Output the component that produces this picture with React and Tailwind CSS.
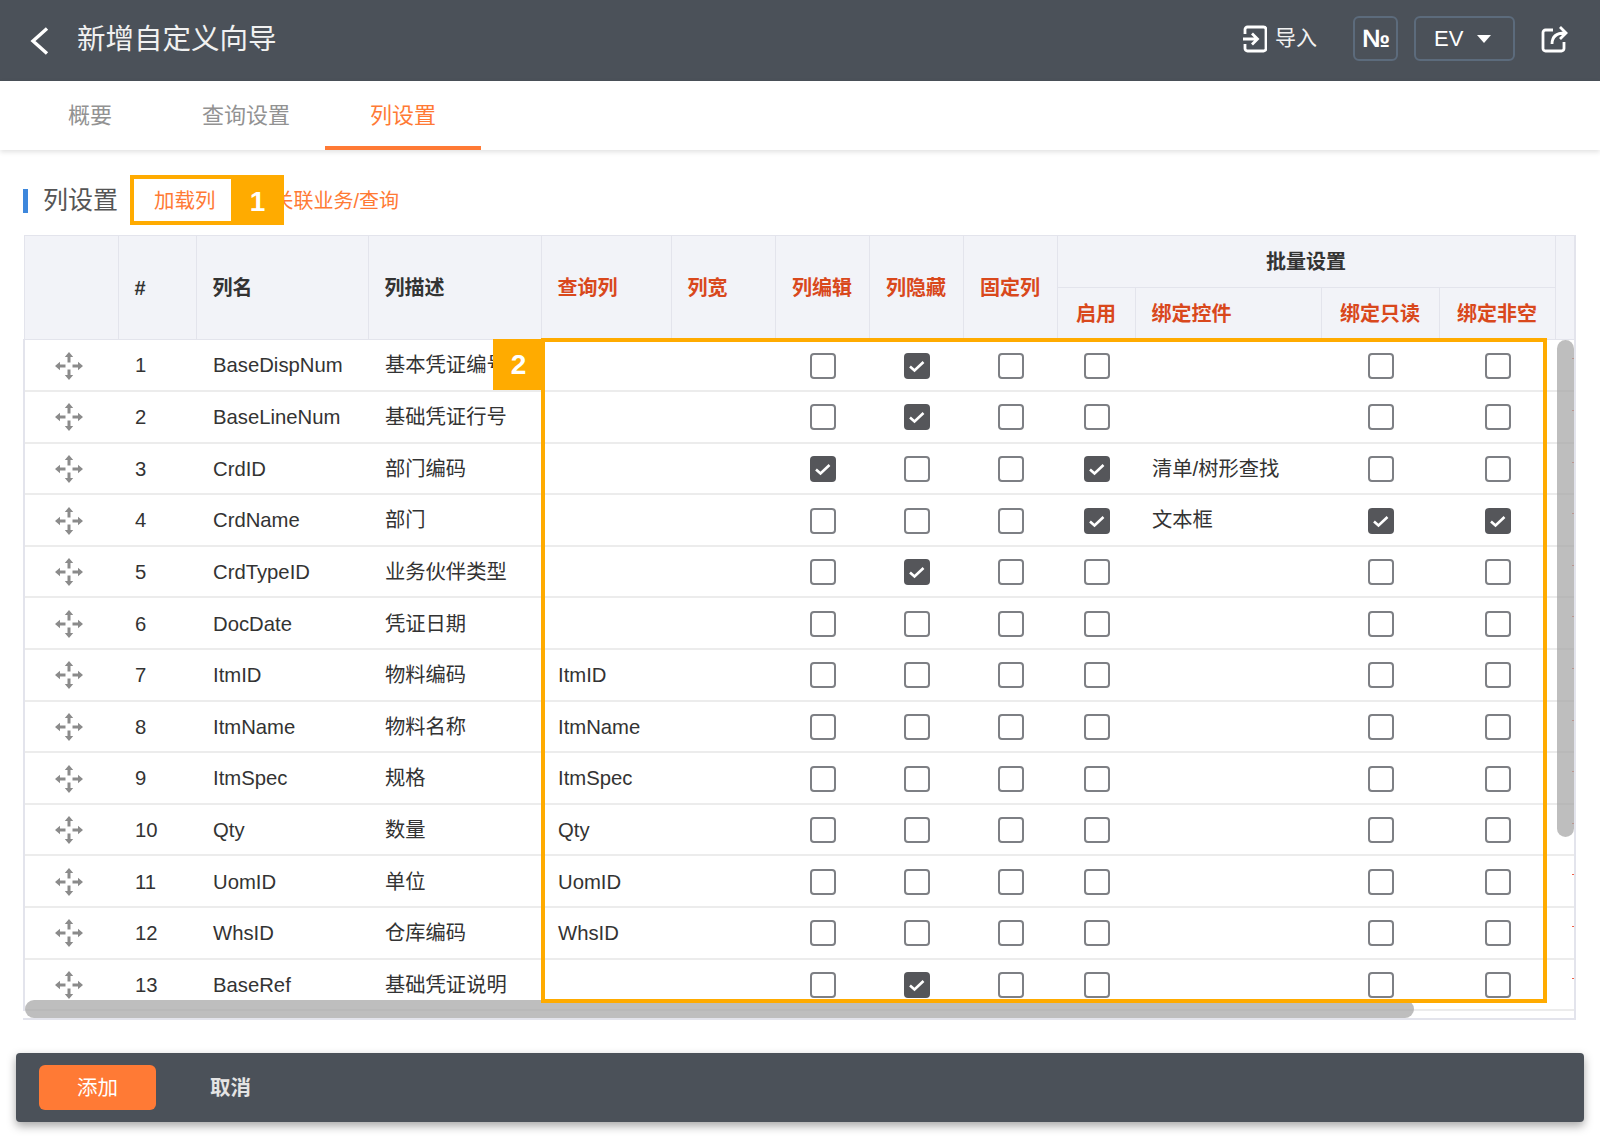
import React from 'react';

const rows = [
  { n: 1, name: 'BaseDispNum', desc: '基本凭证编号', query: '', checks: [0, 1, 0, 0, 0, 0] },
  { n: 2, name: 'BaseLineNum', desc: '基础凭证行号', query: '', checks: [0, 1, 0, 0, 0, 0] },
  { n: 3, name: 'CrdID', desc: '部门编码', query: '', checks: [1, 0, 0, 1, 0, 0], control: '清单/树形查找' },
  { n: 4, name: 'CrdName', desc: '部门', query: '', checks: [0, 0, 0, 1, 1, 1], control: '文本框' },
  { n: 5, name: 'CrdTypeID', desc: '业务伙伴类型', query: '', checks: [0, 1, 0, 0, 0, 0] },
  { n: 6, name: 'DocDate', desc: '凭证日期', query: '', checks: [0, 0, 0, 0, 0, 0] },
  { n: 7, name: 'ItmID', desc: '物料编码', query: 'ItmID', checks: [0, 0, 0, 0, 0, 0] },
  { n: 8, name: 'ItmName', desc: '物料名称', query: 'ItmName', checks: [0, 0, 0, 0, 0, 0] },
  { n: 9, name: 'ItmSpec', desc: '规格', query: 'ItmSpec', checks: [0, 0, 0, 0, 0, 0] },
  { n: 10, name: 'Qty', desc: '数量', query: 'Qty', checks: [0, 0, 0, 0, 0, 0] },
  { n: 11, name: 'UomID', desc: '单位', query: 'UomID', checks: [0, 0, 0, 0, 0, 0] },
  { n: 12, name: 'WhsID', desc: '仓库编码', query: 'WhsID', checks: [0, 0, 0, 0, 0, 0] },
  { n: 13, name: 'BaseRef', desc: '基础凭证说明', query: '', checks: [0, 1, 0, 0, 0, 0] },
];

const colWidths = [94, 78, 172, 173, 130, 104, 94, 94, 94, 78, 186, 118, 116, 20];

function Checkbox({ checked }) {
  if (checked) {
    return (
      <span className="mx-auto flex h-[26px] w-[26px] items-center justify-center rounded-[4px] bg-[#55565a]">
        <svg width="20" height="20" viewBox="0 0 20 20" fill="none">
          <path d="M3 10.500l4.500 4 9-8.500" stroke="#fff" strokeWidth="2.600" />
        </svg>
      </span>
    );
  }
  return <span className="mx-auto block h-[26px] w-[26px] rounded-[4px] border-2 border-[#7d7f84] bg-white" />;
}

function DragIcon() {
  return (
    <svg className="mx-auto" width="28" height="28" viewBox="0 0 28 28" fill="#8b8b8b">
      <path d="M14 0l4.200 5h-2.700v5.500h-3V5H9.800z" />
      <path d="M14 28l4.200-5h-2.700v-5.500h-3V23H9.800z" />
      <path d="M0 14l5-4.200v2.700h5.500v3H5v2.700z" />
      <path d="M28 14l-5-4.200v2.700h-5.500v3H23v2.700z" />
    </svg>
  );
}

export default function App() {
  const thBase = 'border border-[#e3e4ec] bg-[#f2f3f8] text-[20px] font-bold';
  const thDark = `${thBase} px-4 text-left text-[#333]`;
  const thRed = `${thBase} text-center text-[#d9481c]`;
  const tdText = 'pl-[17px] pr-4 text-left text-[20.300px] text-[#333] whitespace-nowrap overflow-hidden';

  return (
    <div className="relative h-[1138px] w-[1600px] overflow-hidden bg-white font-['Liberation_Sans','Noto_Sans_CJK_SC',sans-serif]">
      {/* Top bar */}
      <div className="flex h-[81px] items-center bg-[#4b5159] pl-[30px] pr-[32px] text-white">
        <svg width="19" height="28" viewBox="0 0 19 28" fill="none">
          <path d="M17 1.500L3 14l14 12.500" stroke="#fff" strokeWidth="3.400" />
        </svg>
        <span className="ml-[28px] pb-[2px] text-[28.500px] text-[#f1f1f1]">新增自定义向导</span>
        <div className="ml-auto flex items-center pb-[4px]">
          <svg width="25" height="28" viewBox="0 0 25 28" fill="none" stroke="#fff" strokeWidth="2.800">
            <path d="M3 9V4.500A2.500 2.500 0 0 1 5.500 2h16A2.500 2.500 0 0 1 24 4.500v19a2.500 2.500 0 0 1-2.500 2.500h-16A2.500 2.500 0 0 1 3 23.500V19" />
            <path d="M1 14h14M10 8.500l5.500 5.500-5.500 5.500" />
          </svg>
          <span className="ml-[8px] pb-[2px] text-[21px] text-[#f1f1f1]">导入</span>
          <span className="ml-[36px] flex h-[45px] w-[45px] items-center justify-center rounded-[6px] border-2 border-[#5c6b7c] text-[25px] font-bold tracking-tight">№</span>
          <span className="ml-[16px] flex h-[45px] w-[101px] items-center rounded-[6px] border-2 border-[#5c6b7c] pl-[18px] text-[22px]">
            EV
            <svg className="ml-[14px]" width="14" height="8" viewBox="0 0 14 8" fill="#fff">
              <path d="M0 0h14L7 8z" />
            </svg>
          </span>
          <svg className="ml-[26px]" width="27" height="28" viewBox="0 0 27 28" fill="none" stroke="#fff" strokeWidth="2.800">
            <path d="M12 5H4.500A2.500 2.500 0 0 0 2 7.500v16A2.500 2.500 0 0 0 4.500 26h16a2.500 2.500 0 0 0 2.500-2.500V17" />
            <path d="M11 19c0-7 4-11 13-11M19 2l6 6-6 6" />
          </svg>
        </div>
      </div>

      {/* Tabs */}
      <div className="relative z-10 flex h-[69px] pl-[24px] text-[22px] shadow-[0_2px_5px_rgba(0,0,0,0.12)]">
        <div className="flex w-[132px] items-center justify-center text-[#929292]">概要</div>
        <div className="flex w-[169px] items-center pl-[46px] text-[#929292]">查询设置</div>
        <div className="flex w-[156px] items-center justify-center border-b-4 border-[#ff7a35] pt-[4px] text-[#ff7a35]">列设置</div>
      </div>

      {/* Section title */}
      <div className="flex h-[85px] items-center pl-[23px] pt-[17px]">
        <span className="h-[24px] w-[5px] bg-[#3d87dc]" />
        <span className="ml-[15px] text-[25px] text-[#555]">列设置</span>
        <span className="ml-[36px] text-[20.500px] text-[#ff7a35]">加载列</span>
        <span className="ml-[58px] text-[20px] text-[#ff7a35]">关联业务/查询</span>
      </div>

      {/* Table */}
      <div className="relative ml-[23px] h-[785px] w-[1553px] overflow-hidden border-b-2 border-r-2 border-[#e3e4ec]">
        <table className="w-[1551px] table-fixed">
          <colgroup>
            {colWidths.map((w, i) => (
              <col key={i} style={{ width: w }} />
            ))}
          </colgroup>
          <thead>
            <tr className="h-[52px]">
              <th rowSpan={2} className={thDark} />
              <th rowSpan={2} className={thDark}>#</th>
              <th rowSpan={2} className={thDark}>列名</th>
              <th rowSpan={2} className={thDark}>列描述</th>
              <th rowSpan={2} className={`${thRed} !text-left px-4`}>查询列</th>
              <th rowSpan={2} className={`${thRed} !text-left px-4`}>列宽</th>
              <th rowSpan={2} className={thRed}>列编辑</th>
              <th rowSpan={2} className={thRed}>列隐藏</th>
              <th rowSpan={2} className={thRed}>固定列</th>
              <th colSpan={4} className={`${thBase} text-center text-[#333]`}>批量设置</th>
              <th rowSpan={2} className={thBase} />
            </tr>
            <tr className="h-[52px]">
              <th className={thRed}>启用</th>
              <th className={`${thRed} !text-left px-4`}>绑定控件</th>
              <th className={thRed}>绑定只读</th>
              <th className={thRed}>绑定非空</th>
            </tr>
          </thead>
          <tbody>
            {rows.map((row) => (
              <tr key={row.n} className="h-[51.6px] border-b-2 border-[#ececec] [&>td]:pt-[1px]">
                <td className="border-l-2 border-[#e3e4ec] pr-[5px]"><DragIcon /></td>
                <td className={tdText}>{row.n}</td>
                <td className={tdText}>{row.name}</td>
                <td className={tdText}>{row.desc}</td>
                <td className={tdText}>{row.query}</td>
                <td />
                <td className="pl-[2px]"><Checkbox checked={row.checks[0]} /></td>
                <td className="pl-[2px]"><Checkbox checked={row.checks[1]} /></td>
                <td className="pl-[2px]"><Checkbox checked={row.checks[2]} /></td>
                <td className="pl-[2px]"><Checkbox checked={row.checks[3]} /></td>
                <td className={tdText}>{row.control}</td>
                <td className="pl-[2px]"><Checkbox checked={row.checks[4]} /></td>
                <td className="pl-[2px]"><Checkbox checked={row.checks[5]} /></td>
                <td className="relative">
                  <span className="absolute right-0 top-[18px] h-px w-[3px] bg-[#f0604a]" />
                </td>
              </tr>
            ))}
          </tbody>
        </table>

        {/* Scrollbars */}
        <div className="absolute left-[1534px] top-[105px] h-[497px] w-[17px] rounded-full bg-[#a8a8a8]/75" />
        <div className="absolute bottom-0 left-[2px] h-[18px] w-[1389px] rounded-full bg-[#a8a8a8]/75" />
      </div>

      {/* Footer */}
      <div className="ml-[16px] mt-[33px] flex h-[69px] w-[1568px] items-center rounded-[4px] bg-[#4b5159] pl-[23px] shadow-[0_4px_10px_rgba(0,0,0,0.35)]">
        <button className="h-[45px] w-[117px] rounded-[6px] bg-[#ff7a35] pt-[2px] text-[20.500px] text-white">添加</button>
        <button className="ml-[54px] pt-[2px] text-[20.500px] font-bold text-[#e4e4e4]">取消</button>
      </div>

      {/* Annotation 1 */}
      <div className="absolute left-[130px] top-[175px] flex h-[50px] w-[154px]">
        <div className="flex-1 border-y-4 border-l-4 border-[#ffab00]" />
        <div className="flex w-[53px] items-center justify-center bg-[#ffab00] pt-[3px] text-[28px] font-bold text-white">1</div>
      </div>

      {/* Annotation 2 */}
      <div className="absolute left-[541px] top-[338px] h-[665px] w-[1006px] border-4 border-[#ffab00]" />
      <div className="absolute left-[493px] top-[339px] flex h-[51px] w-[51px] items-center justify-center bg-[#ffab00] text-[28px] font-bold text-white">2</div>
    </div>
  );
}
